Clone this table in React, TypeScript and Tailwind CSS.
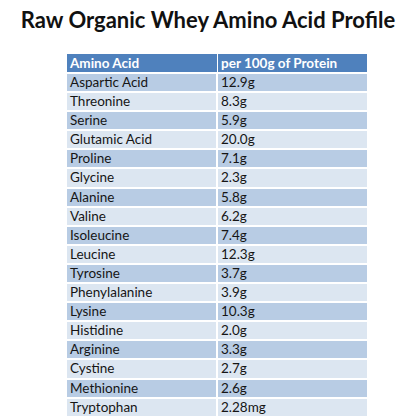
const rows: [string, string][] = [
  ["Aspartic Acid", "12.9g"],
  ["Threonine", "8.3g"],
  ["Serine", "5.9g"],
  ["Glutamic Acid", "20.0g"],
  ["Proline", "7.1g"],
  ["Glycine", "2.3g"],
  ["Alanine", "5.8g"],
  ["Valine", "6.2g"],
  ["Isoleucine", "7.4g"],
  ["Leucine", "12.3g"],
  ["Tyrosine", "3.7g"],
  ["Phenylalanine", "3.9g"],
  ["Lysine", "10.3g"],
  ["Histidine", "2.0g"],
  ["Arginine", "3.3g"],
  ["Cystine", "2.7g"],
  ["Methionine", "2.6g"],
  ["Tryptophan", "2.28mg"],
];

export default function App() {
  return (
    <div className="w-[416px] h-[418px] overflow-hidden bg-white font-['Lato',sans-serif]">
      <h1 className="pt-[5px] text-center whitespace-nowrap text-[22px] font-bold leading-[30px] text-[#111]">
        Raw Organic Whey Amino Acid Profile
      </h1>
      <div className="ml-[67px] mt-[19px] w-[300px] flex flex-col">
        <div className="grid grid-cols-[151px_149px] h-[18px] bg-[#4f81bd] text-white font-bold text-[13.5px] leading-[18px]">
          <div className="pl-[3px] border-r border-white">Amino Acid</div>
          <div className="pl-[3px]">per 100g of Protein</div>
        </div>
        {rows.map(([name, amount], i) => (
          <div
            key={name}
            className={`grid grid-cols-[151px_149px] h-[19.1px] border-t-2 border-white text-[13.5px] leading-[17px] text-[#151515] ${
              i % 2 === 0 ? "bg-[#b8cce4]" : "bg-[#dce6f1]"
            }`}
          >
            <div className="pl-[3px] border-r-2 border-white">{name}</div>
            <div className="pl-[3px]">{amount}</div>
          </div>
        ))}
      </div>
    </div>
  );
}
